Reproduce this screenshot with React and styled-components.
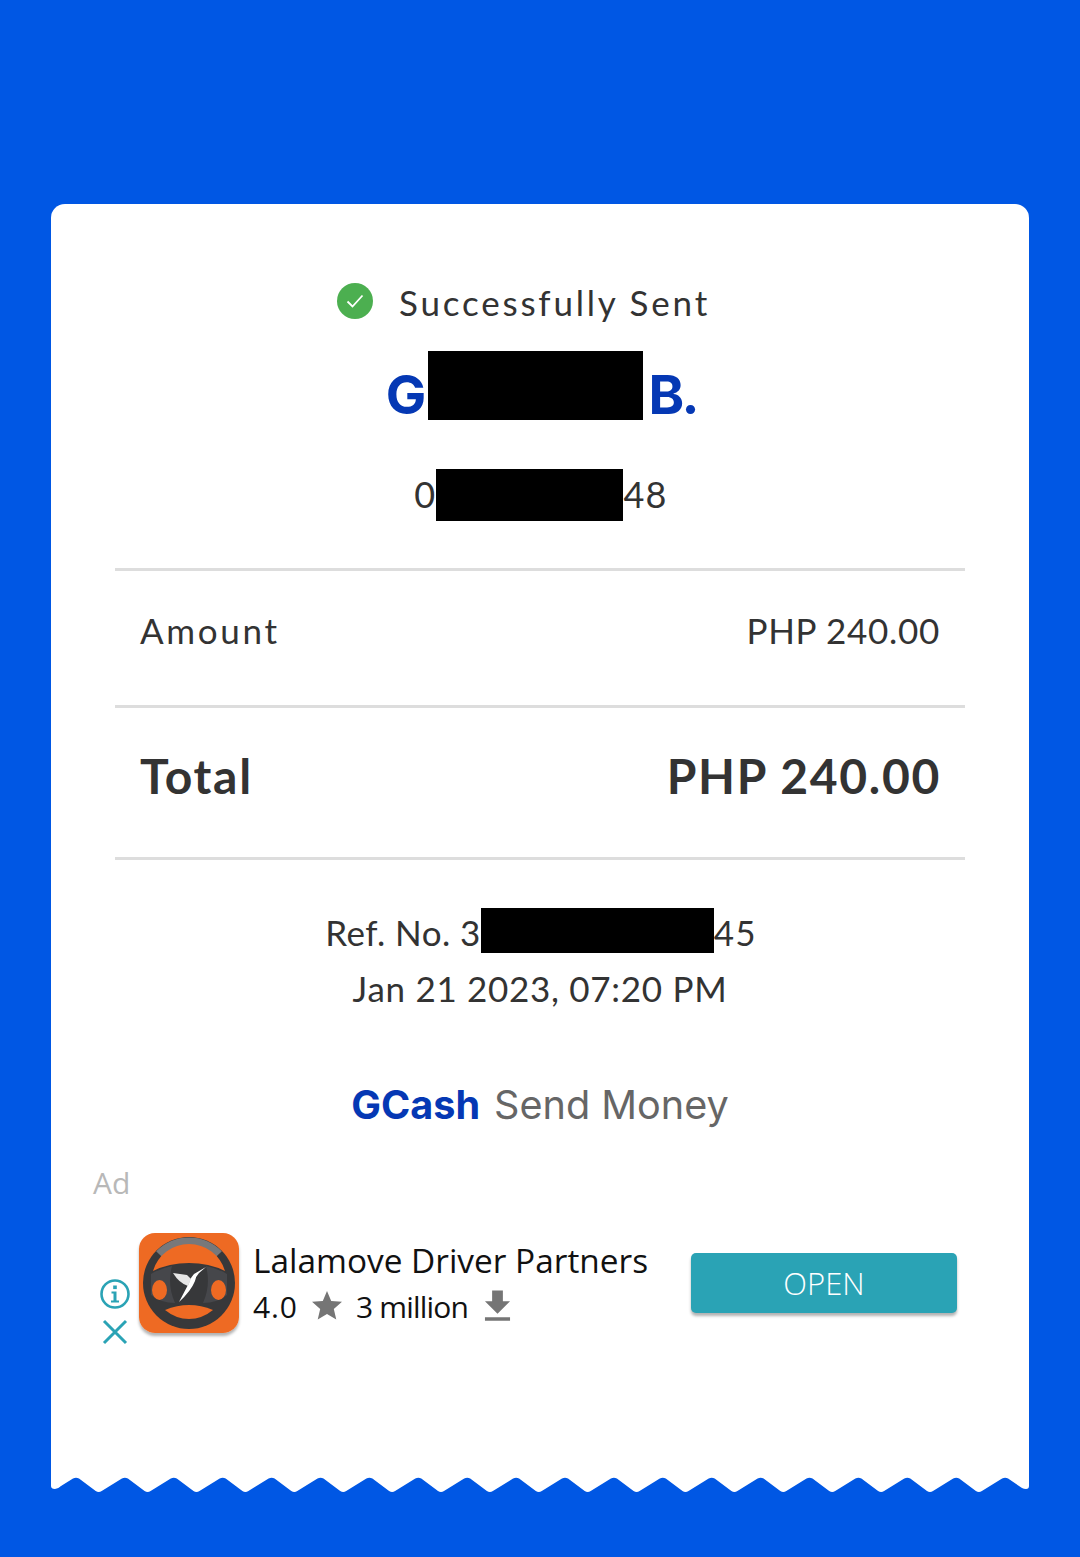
import React from "react";
import styled, { createGlobalStyle } from "styled-components";
import { MdStar, MdFileDownload } from "react-icons/md";

const BLUE = "#0057e4";
const NAVY = "#0538b4";
const TEAL = "#2aa3b5";
const INK = "#333333";
const BODY_FONT = `"Lato", "Open Sans", sans-serif`;
const AD_FONT = `"Open Sans", Roboto, sans-serif`;
const BRAND_FONT = `Inter, "Liberation Sans", sans-serif`;

const GlobalStyle = createGlobalStyle`
  html, body {
    margin: 0;
    padding: 0;
    background: ${BLUE};
  }
`;

const Page = styled.div`
  width: 1080px;
  height: 1557px;
  box-sizing: border-box;
  padding: 204px 51px 0;
  background: ${BLUE};
  overflow: hidden;
`;

const Card = styled.div`
  height: 1273px;
  box-sizing: border-box;
  padding-top: 75px;
  background: #fff;
  border-radius: 14px 14px 0 0;
  display: flex;
  flex-direction: column;
  align-items: center;
`;

const Zigzag = styled.svg`
  display: block;
  width: 978px;
  height: 16px;
`;

const Status = styled.div`
  height: 46px;
  padding-right: 33px;
  display: flex;
  align-items: center;
  gap: 26px;
  font: 400 35px/42px ${BODY_FONT};
  letter-spacing: 2.8px;
  color: ${INK};

  svg {
    margin-bottom: 2px;
  }
`;

const Name = styled.div`
  margin-top: 26px;
  height: 69px;
  padding-left: 3px;
  display: flex;
  align-items: flex-end;
  font: 700 54px/51px ${BRAND_FONT};
  color: ${NAVY};
`;

const NameStart = styled.span`
  margin-right: 2px;
`;

const NameEnd = styled.span`
  margin-left: 5px;
  letter-spacing: -2.5px;
`;

const Phone = styled.div`
  margin-top: 49px;
  height: 52px;
  padding-left: 2px;
  display: flex;
  align-items: center;
  font: 400 36px/50px ${BODY_FONT};
  letter-spacing: 1.3px;
  color: ${INK};

  span:not(:empty) {
    padding-bottom: 2px;
  }
`;

const Redacted = styled.span`
  display: block;
  flex: none;
  width: ${(props) => props.w}px;
  height: ${(props) => props.h}px;
  background: #000;
`;

const Divider = styled.div`
  flex: none;
  width: 850px;
  height: 3px;
  margin-top: ${(props) => props.top || 0}px;
  background: #dddddd;
`;

const Row = styled.div`
  flex: none;
  width: 850px;
  height: ${(props) => props.h}px;
  box-sizing: border-box;
  padding: ${(props) => (props.bold ? "0 24px 13px 25px" : "0 25px 16px 25px")};
  display: flex;
  align-items: center;
  justify-content: space-between;
  color: ${INK};
  font: ${(props) => (props.bold ? "700 48px" : "400 35px")}/1.2 ${BODY_FONT};
  letter-spacing: ${(props) => (props.bold ? "1.7px" : "0.7px")};
`;

const RowLabel = styled.span`
  letter-spacing: ${(props) => (props.wide ? "2.7px" : "inherit")};
`;

const RefLine = styled.div`
  margin-top: 48px;
  height: 45px;
  padding-left: 2px;
  display: flex;
  align-items: center;
  font: 400 35px/49px ${BODY_FONT};
  color: ${INK};
  letter-spacing: 0.4px;

  span:not(:empty) {
    padding-top: 4px;
  }

  span:last-child {
    letter-spacing: 1.2px;
  }
`;

const DateLine = styled.div`
  margin-top: 13px;
  height: 44px;
  font: 400 35px/44px ${BODY_FONT};
  letter-spacing: 0.7px;
  color: ${INK};
`;

const Brand = styled.div`
  margin-top: 70px;
  height: 50px;
  display: flex;
  gap: 14px;
  font: 400 39.6px/50px ${BRAND_FONT};
  color: #666666;
`;

const BrandName = styled.span`
  font-weight: 700;
  color: ${NAVY};
`;

const AdLabel = styled.div`
  align-self: flex-start;
  margin: 33px 0 0 42px;
  height: 40px;
  font: 400 30px/40px ${AD_FONT};
  color: #b8b8b8;
`;

const AdRow = styled.div`
  align-self: stretch;
  margin-top: 30px;
  padding-left: 49px;
  display: flex;
  align-items: flex-start;
`;

const AdControls = styled.div`
  flex: none;
  width: 30px;
  margin: 46px 9px 0 0;
  display: flex;
  flex-direction: column;
  align-items: center;
  gap: 10px;
`;

const AppIcon = styled.svg`
  flex: none;
  display: block;
  width: 100px;
  height: 100px;
  border-radius: 16px;
  box-shadow: 0 3px 3px rgba(0, 0, 0, 0.3);
`;

const AdText = styled.div`
  flex: none;
  width: 438px;
  margin-left: 14px;
  color: #111;
  font-family: ${AD_FONT};
`;

const AdTitle = styled.div`
  margin-top: 6px;
  font-size: 33.4px;
  line-height: 42px;
  white-space: nowrap;
`;

const AdMeta = styled.div`
  margin-top: 3px;
  display: flex;
  align-items: center;
  height: 44px;
  font-size: 30px;
  color: #111;
  white-space: nowrap;

  svg {
    flex: none;
    color: #757575;
  }
`;

const Rating = styled.span`
  letter-spacing: 0.9px;
`;

const Installs = styled.span`
  margin-left: 11px;
  letter-spacing: -0.8px;
`;

const OpenButton = styled.div`
  flex: none;
  width: 266px;
  height: 60px;
  margin-top: 20px;
  border-radius: 5px;
  background: ${TEAL};
  color: #fff;
  box-shadow: 0 3px 3px rgba(0, 0, 0, 0.3);
  text-align: center;
  font: 300 31px/60px ${AD_FONT};
`;

// teeth of the torn receipt edge, rounded with a small curve at each tip
const buildEdge = () => {
  const step = 48.9;
  let d = "M0 0 L0 9 Q0 12 4 12 Q7 12 10 9 L22 1.5 Q25 0 28 1.5";
  let x = 25;
  for (let i = 0; i < 19; i++) {
    const valley = x + 22.7;
    const peak = x + step;
    d += ` L${valley - 3} 14 Q${valley} 16 ${valley + 3} 14`;
    d += ` L${peak - 3} 1.5 Q${peak} 0 ${peak + 3} 1.5`;
    x = peak;
  }
  d += " L971 11 Q973 12 975 12 Q978 12 978 9 L978 0 Z";
  return d;
};

const CheckBadge = () => (
  <svg width="36" height="36" viewBox="0 0 36 36">
    <circle cx="18" cy="18" r="18" fill="#4caf50" />
    <path d="M10.5 18.5l5 5 10-11" fill="none" stroke="#fff" strokeWidth="1.8" />
  </svg>
);

const InfoIcon = () => (
  <svg width="30" height="30" viewBox="0 0 30 30">
    <circle cx="15" cy="15" r="13.5" fill="none" stroke={TEAL} strokeWidth="2.6" />
    <rect x="13.2" y="6.5" width="3.6" height="3.6" fill={TEAL} />
    <path d="M11.5 12.5h5v9h2.5v2h-8v-2h2.5v-7h-2z" fill={TEAL} />
  </svg>
);

const CloseIcon = () => (
  <svg width="26" height="26" viewBox="0 0 26 26">
    <path d="M2 2l22 22M24 2L2 24" stroke={TEAL} strokeWidth="3" fill="none" />
  </svg>
);

const LalamoveIcon = () => (
  <AppIcon viewBox="0 0 100 100">
    <rect width="100" height="100" fill="#ee6a23" />
    <circle cx="50" cy="50" r="46" fill="#37383a" />
    <path d="M20 21A42 42 0 0 1 80 21" fill="none" stroke="#77787a" strokeWidth="8" />
    <path d="M14 38A37.5 37.5 0 0 1 86 38Q70 30 50 30Q30 30 14 38Z" fill="#ee6a23" />
    <path
      d="M12 41Q22 35 33 33Q28 52 36 70Q22 70 12 62ZM88 41Q78 35 67 33Q72 52 64 70Q78 70 88 62Z"
      fill="#46474b"
    />
    <path d="M26 77Q38 72 50 72Q62 72 74 77Q63 86 50 86Q37 86 26 77Z" fill="#ee6a23" />
    <ellipse cx="20.5" cy="57" rx="7.5" ry="10" fill="#ee6a23" />
    <ellipse cx="79.5" cy="57" rx="7.5" ry="10" fill="#ee6a23" />
    <path d="M67 34L55 41Q50 47 50 50L40 69Q52 58 56 48Q57 43 60 40Z" fill="#fff" />
    <path d="M34 40L48 42L52 46L49 53Q40 50 34 40Z" fill="#e6e6e6" />
  </AppIcon>
);

const App = () => {
  return (
    <Page>
      <GlobalStyle />
      <Card>
        <Status>
          <CheckBadge />
          <span>Successfully Sent</span>
        </Status>
        <Name>
          <NameStart>G</NameStart>
          <Redacted w={215} h={69} />
          <NameEnd>B.</NameEnd>
        </Name>
        <Phone>
          <span>0</span>
          <Redacted w={187} h={52} />
          <span>48</span>
        </Phone>
        <Divider top={47} />
        <Row h={134}>
          <RowLabel wide>Amount</RowLabel>
          <RowLabel>PHP 240.00</RowLabel>
        </Row>
        <Divider />
        <Row h={149} bold>
          <RowLabel>Total</RowLabel>
          <RowLabel>PHP 240.00</RowLabel>
        </Row>
        <Divider />
        <RefLine>
          <span>Ref. No. 3</span>
          <Redacted w={233} h={45} />
          <span>45</span>
        </RefLine>
        <DateLine>Jan 21 2023, 07:20 PM</DateLine>
        <Brand>
          <BrandName>GCash</BrandName>
          <span>Send Money</span>
        </Brand>
        <AdLabel>Ad</AdLabel>
        <AdRow>
          <AdControls>
            <InfoIcon />
            <CloseIcon />
          </AdControls>
          <LalamoveIcon />
          <AdText>
            <AdTitle>Lalamove Driver Partners</AdTitle>
            <AdMeta>
              <Rating>4.0</Rating>
              <MdStar size={36} style={{ marginLeft: 11 }} />
              <Installs>3 million</Installs>
              <MdFileDownload size={43} style={{ marginLeft: 8 }} />
            </AdMeta>
          </AdText>
          <OpenButton>OPEN</OpenButton>
        </AdRow>
      </Card>
      <Zigzag viewBox="0 0 978 16">
        <path d={buildEdge()} fill="#fff" />
      </Zigzag>
    </Page>
  );
};

export default App;
